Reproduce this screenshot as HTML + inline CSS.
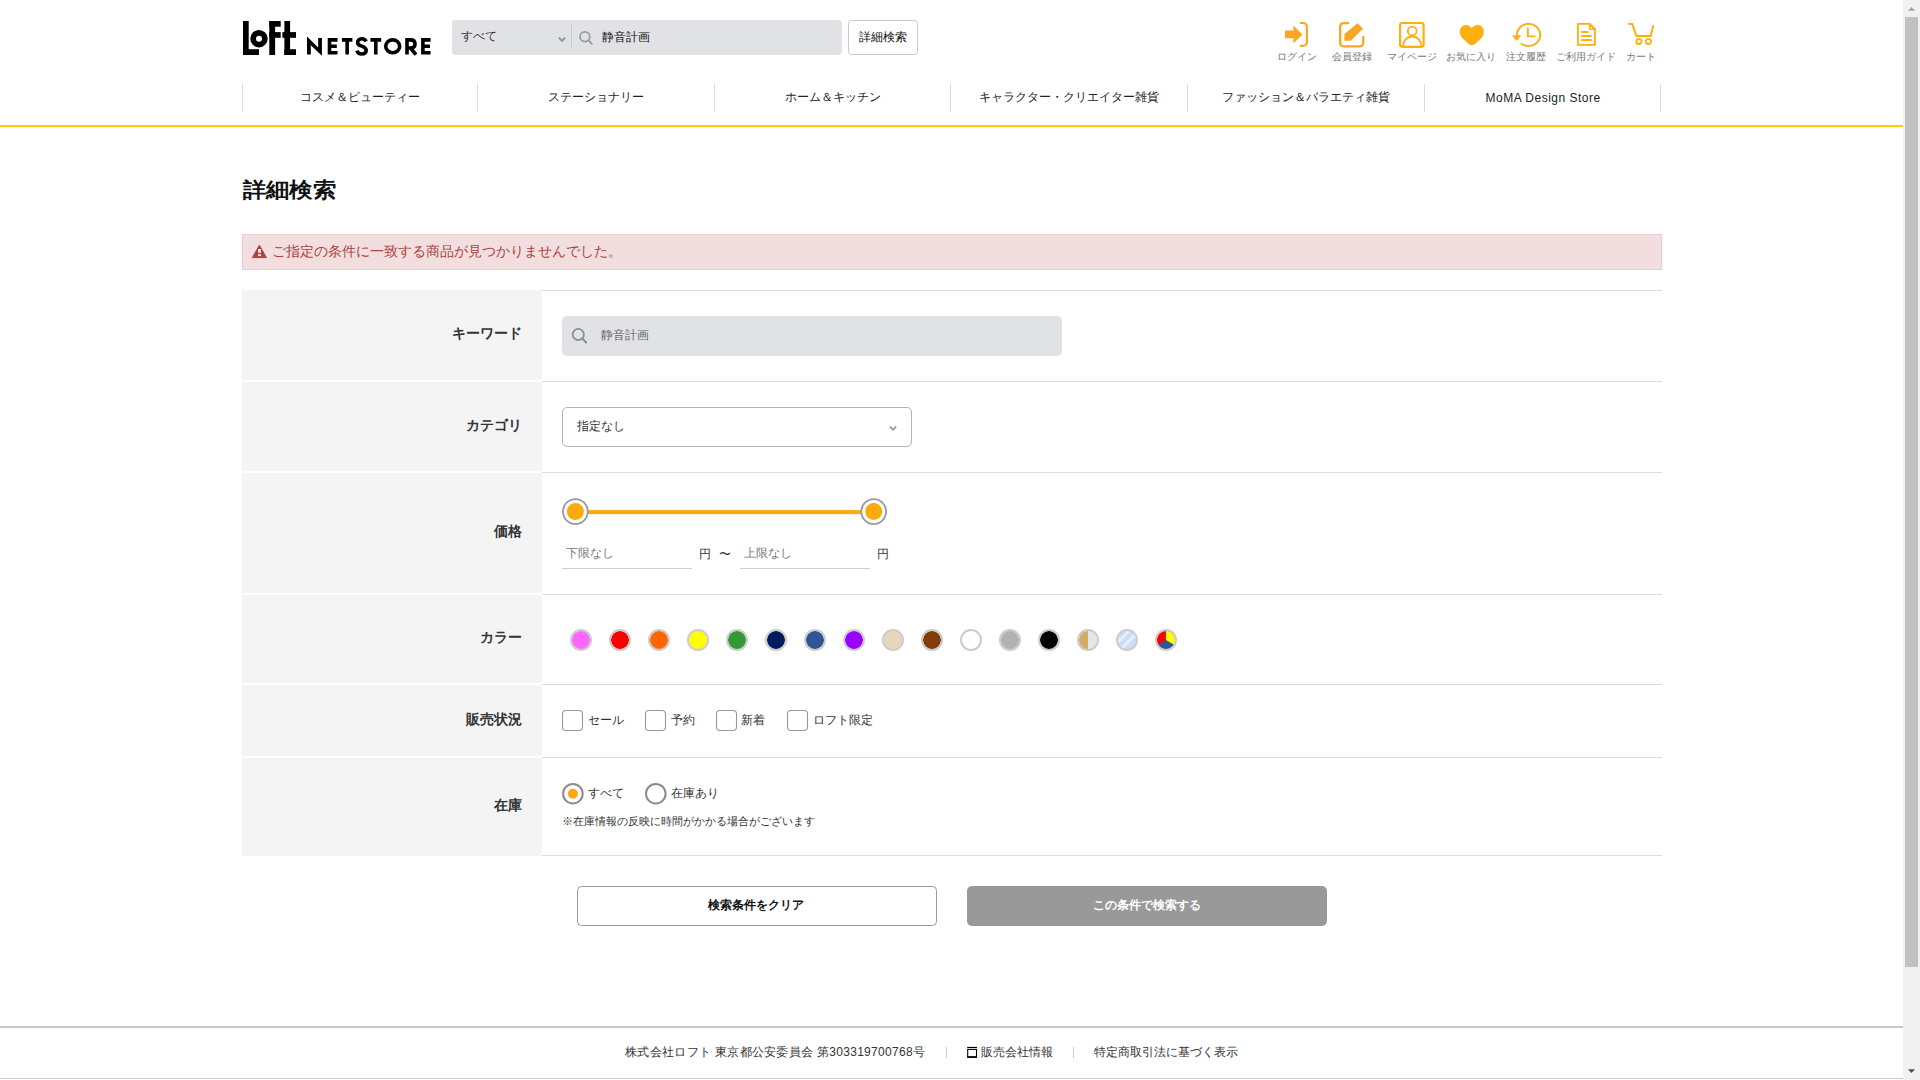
<!DOCTYPE html>
<html><head><meta charset="utf-8"><title>詳細検索 | LOFT NETSTORE</title>
<style>
html,body{margin:0;padding:0;width:1920px;height:1080px;overflow:hidden;background:#fff;}
body{position:relative;font-family:"Liberation Sans",sans-serif;}
.t{position:absolute;white-space:nowrap;}
svg{position:absolute;left:0;top:0;}
</style></head><body>
<svg width="1920" height="1080" viewBox="0 0 1920 1080">
<g fill="#000"><rect x="243" y="21" width="5.7" height="34"/><rect x="243" y="49.2" width="16" height="5.8"/><rect x="269.3" y="21" width="5.8" height="34"/><rect x="269.3" y="21" width="11.4" height="5.7"/><rect x="269.3" y="32.1" width="11.4" height="5.7"/><rect x="284.4" y="21" width="5.7" height="34"/><rect x="282.4" y="32.1" width="13.6" height="5.7"/><rect x="284.4" y="49.2" width="11.6" height="5.8"/></g><circle cx="259" cy="38.7" r="5.85" fill="none" stroke="#000" stroke-width="5.7"/>
<g fill="none" stroke="#000" stroke-width="3.6" stroke-linejoin="miter" stroke-linecap="butt"><path d="M337.5,39.9 H329.5 V52.8 H337.5 M329.5,46.3 H336.8"/><path d="M341.9,39.9 H352.4 M347.15,39.9 V54.6"/><path d="M366.2,41.4 C365.3,39.6 364,38.8 361.8,38.8 C359.2,38.8 357.6,40.4 357.6,42.4 C357.6,47.2 366.2,45 366.2,50.4 C366.2,52.6 364.4,54 361.8,54 C359.2,54 357.6,52.6 356.9,50.6"/><path d="M370.4,39.9 H381.2 M375.8,39.9 V54.6"/><ellipse cx="392.7" cy="46.35" rx="7.0" ry="6.45"/><path d="M407,54.6 V39.9 H410.5 C413.5,39.9 415,41.6 415,44 C415,46.5 413.3,48 410.5,48 H407 M410.5,48 L416,54.6"/><path d="M430.6,39.9 H422.9 V52.8 H430.6 M422.9,46.3 H430"/></g>
<path d="M307,54.6 V36.4 L318.2,47.5 V38.1 H321.9 V55.7 L310.8,45.2 V54.6 Z" fill="#000"/>
<rect x="452" y="20" width="390" height="35" rx="4" fill="#e1e2e6"/>
<path d="M558.9,37.7 L562.0,40.9 L565.1,37.7" fill="none" stroke="#959595" stroke-width="1.9"/>
<rect x="571" y="25" width="1" height="23" fill="#c9c9cb"/>
<circle cx="584.9" cy="36.75" r="4.9" fill="none" stroke="#999" stroke-width="1.7"/><path d="M588.4,40.2 L591.8,43.8" stroke="#999" stroke-width="1.9" stroke-linecap="round"/>
<rect x="848.5" y="20.5" width="69" height="34" rx="3" fill="#fff" stroke="#c8c8c8" stroke-width="1"/>
<g fill="#f8a625"><path d="M1285,30.4 H1293.4 V25.4 L1302.5,34.4 L1293.4,43.5 V38.2 H1285 Z"/></g>
<path d="M1300,23 H1303 A3.9,3.9 0 0 1 1306.9,26.9 V41.9 A3.9,3.9 0 0 1 1303,45.8 H1300" fill="none" stroke="#f8a625" stroke-width="2.2"/>
<path d="M1349,23.05 H1343.5 A3.3,3.3 0 0 0 1340.15,26.4 V43.1 A3.3,3.3 0 0 0 1343.5,46.45 H1359.9 A3.3,3.3 0 0 0 1363.25,43.1 V36" fill="none" stroke="#f8a625" stroke-width="2.3"/>
<path d="M1344.4,34.1 L1357.5,23.2 L1363.1,28.8 L1350.6,40.7 L1344.4,40.7 Z" fill="#f8a625"/>
<rect x="1400.1" y="23" width="23.5" height="23.8" rx="2.2" fill="none" stroke="#ffaf0d" stroke-width="2.2"/>
<circle cx="1412.2" cy="31" r="4.4" fill="none" stroke="#ffaf0d" stroke-width="1.8"/>
<path d="M1403,46.5 A9.2,10 0 0 1 1421.4,46.5" fill="none" stroke="#ffaf0d" stroke-width="1.8"/>
<path d="M1471.85,45.1 C1470.6,45.1 1469.4,44.6 1468.4,43.7 L1462.3,38.0 C1460.7,36.3 1459.8,34.1 1459.8,31.6 C1459.8,27.9 1462.6,25 1466.1,25 C1468.5,25 1470.6,26.3 1471.85,28.2 C1473.1,26.3 1475.2,25 1477.6,25 C1481.1,25 1483.9,27.9 1483.9,31.6 C1483.9,34.1 1483,36.3 1481.4,38.0 L1475.3,43.7 C1474.3,44.6 1473.1,45.1 1471.85,45.1 Z" fill="#ffaf0d"/>
<path d="M1517.0,34.9 A11.6,11.1 0 1 1 1521.54,43.71" fill="none" stroke="#ffaf0d" stroke-width="1.9" stroke-linecap="round"/>
<path d="M1512.1,35.2 H1521.3 L1516.5,41 Z" fill="#ffaf0d"/>
<path d="M1527.9,28.2 V36.4 H1534.6" fill="none" stroke="#ffaf0d" stroke-width="1.8" stroke-linecap="round"/>
<path d="M1577.9,23.9 H1589.6 L1594.95,29 V44.95 H1577.9 Z" fill="none" stroke="#ffaf0d" stroke-width="1.8" stroke-linejoin="round"/>
<path d="M1589.8,24.2 V29.2 H1594.8 Z" fill="none" stroke="#ffaf0d" stroke-width="1.6" stroke-linejoin="round"/>
<path d="M1582,32 H1587.8 M1582,36 H1590.9 M1582,40 H1590.9" stroke="#ffaf0d" stroke-width="1.9" stroke-linecap="round"/>
<path d="M1628.3,23.9 H1632.3 L1636.3,36 H1650.8 L1653.3,25.2" fill="none" stroke="#ffaf0d" stroke-width="2" stroke-linejoin="round"/>
<circle cx="1638.9" cy="41.4" r="2.6" fill="none" stroke="#ffaf0d" stroke-width="1.8"/>
<circle cx="1648.4" cy="41.4" r="2.6" fill="none" stroke="#ffaf0d" stroke-width="1.8"/>
<rect x="242" y="84" width="1" height="28" fill="#dcdcdc"/>
<rect x="477" y="84" width="1" height="28" fill="#dcdcdc"/>
<rect x="714" y="84" width="1" height="28" fill="#dcdcdc"/>
<rect x="950" y="84" width="1" height="28" fill="#dcdcdc"/>
<rect x="1187" y="84" width="1" height="28" fill="#dcdcdc"/>
<rect x="1424" y="84" width="1" height="28" fill="#dcdcdc"/>
<rect x="1660" y="84" width="1" height="28" fill="#dcdcdc"/>
<rect x="0" y="125" width="1903" height="2" fill="#ffcc00"/>
<rect x="242.5" y="234.5" width="1419" height="35" fill="#f2dede" stroke="#ebccd1" stroke-width="1"/>
<path d="M259.4,245.2 L266.4,257.6 H252.4 Z" fill="#a94442" stroke="#a94442" stroke-width="1" stroke-linejoin="round"/><rect x="258" y="249" width="3" height="3.8" fill="#f2dede"/><rect x="258" y="254.1" width="3" height="2" fill="#f2dede"/>
<rect x="242" y="290" width="300" height="90" fill="#f4f4f4"/>
<rect x="242" y="382" width="300" height="89" fill="#f4f4f4"/>
<rect x="242" y="473" width="300" height="120" fill="#f4f4f4"/>
<rect x="242" y="595" width="300" height="88" fill="#f4f4f4"/>
<rect x="242" y="685" width="300" height="71" fill="#f4f4f4"/>
<rect x="242" y="758" width="300" height="98" fill="#f4f4f4"/>
<rect x="542" y="290" width="1120" height="1" fill="#dddddd"/>
<rect x="542" y="381" width="1120" height="1" fill="#dddddd"/>
<rect x="542" y="472" width="1120" height="1" fill="#dddddd"/>
<rect x="542" y="594" width="1120" height="1" fill="#dddddd"/>
<rect x="542" y="684" width="1120" height="1" fill="#dddddd"/>
<rect x="542" y="757" width="1120" height="1" fill="#dddddd"/>
<rect x="542" y="855" width="1120" height="1" fill="#dddddd"/>
<rect x="562" y="316" width="500" height="40" rx="5" fill="#e1e2e6"/>
<circle cx="578.3" cy="334.5" r="5.6" fill="none" stroke="#8d8d8d" stroke-width="1.8"/><path d="M582.3,338.5 L586.1,342.5" stroke="#8d8d8d" stroke-width="2" stroke-linecap="round"/>
<rect x="562.5" y="407.5" width="349" height="39" rx="4.5" fill="#fff" stroke="#b4b4b4" stroke-width="1"/>
<path d="M889.9,426.6 L893,429.8 L896.1,426.6" fill="none" stroke="#999" stroke-width="1.8"/>
<rect x="588" y="510.1" width="273" height="4" fill="#ffa90a"/>
<circle cx="575.4" cy="511.5" r="12.4" fill="#fff" stroke="#9a9a9a" stroke-width="1.8"/>
<circle cx="575.4" cy="511.5" r="8.5" fill="#ffa90a"/>
<circle cx="873.7" cy="511.5" r="12.4" fill="#fff" stroke="#9a9a9a" stroke-width="1.8"/>
<circle cx="873.7" cy="511.5" r="8.5" fill="#ffa90a"/>
<rect x="562" y="568" width="130" height="1" fill="#cfcfcf"/>
<rect x="740" y="568" width="130" height="1" fill="#cfcfcf"/>
<defs><clipPath id="c14"><circle cx="1088" cy="640" r="9.2"/></clipPath><clipPath id="c15"><circle cx="1127" cy="640" r="9.2"/></clipPath><clipPath id="c16"><circle cx="1166" cy="640" r="9.2"/></clipPath></defs>
<circle cx="581" cy="640" r="9.2" fill="#ff66ff"/>
<circle cx="581" cy="640" r="10" fill="none" stroke="#cccccc" stroke-width="2"/>
<circle cx="620" cy="640" r="9.2" fill="#ff0000"/>
<circle cx="620" cy="640" r="10" fill="none" stroke="#cccccc" stroke-width="2"/>
<circle cx="659" cy="640" r="9.2" fill="#ff6600"/>
<circle cx="659" cy="640" r="10" fill="none" stroke="#cccccc" stroke-width="2"/>
<circle cx="698" cy="640" r="9.2" fill="#ffff00"/>
<circle cx="698" cy="640" r="10" fill="none" stroke="#cccccc" stroke-width="2"/>
<circle cx="737" cy="640" r="9.2" fill="#339933"/>
<circle cx="737" cy="640" r="10" fill="none" stroke="#cccccc" stroke-width="2"/>
<circle cx="776" cy="640" r="9.2" fill="#001c5c"/>
<circle cx="776" cy="640" r="10" fill="none" stroke="#cccccc" stroke-width="2"/>
<circle cx="815" cy="640" r="9.2" fill="#2f5597"/>
<circle cx="815" cy="640" r="10" fill="none" stroke="#cccccc" stroke-width="2"/>
<circle cx="854" cy="640" r="9.2" fill="#9900ff"/>
<circle cx="854" cy="640" r="10" fill="none" stroke="#cccccc" stroke-width="2"/>
<circle cx="893" cy="640" r="9.2" fill="#e6d8b8"/>
<circle cx="893" cy="640" r="10" fill="none" stroke="#cccccc" stroke-width="2"/>
<circle cx="932" cy="640" r="9.2" fill="#843c0c"/>
<circle cx="932" cy="640" r="10" fill="none" stroke="#cccccc" stroke-width="2"/>
<circle cx="971" cy="640" r="9.2" fill="#ffffff"/>
<circle cx="971" cy="640" r="10" fill="none" stroke="#cccccc" stroke-width="2"/>
<circle cx="1010" cy="640" r="9.2" fill="#b2b2b2"/>
<circle cx="1010" cy="640" r="10" fill="none" stroke="#cccccc" stroke-width="2"/>
<circle cx="1049" cy="640" r="9.2" fill="#000000"/>
<circle cx="1049" cy="640" r="10" fill="none" stroke="#cccccc" stroke-width="2"/>
<g clip-path="url(#c14)"><rect x="1078" y="630" width="10" height="20" fill="#d2ad62"/><rect x="1088" y="630" width="10" height="20" fill="#e6e6e6"/></g>
<circle cx="1088" cy="640" r="10" fill="none" stroke="#cccccc" stroke-width="2"/>
<g clip-path="url(#c15)"><rect x="1117" y="630" width="20" height="20" fill="#c9ddf6"/><path d="M1114,646 L1131,629 M1119,651 L1136,634" stroke="#e6f0fb" stroke-width="3"/></g>
<circle cx="1127" cy="640" r="10" fill="none" stroke="#cccccc" stroke-width="2"/>
<g clip-path="url(#c16)"><rect x="1156" y="630" width="20" height="20" fill="#2f5597"/><path d="M1166,640 L1166,629 L1176,629 L1176,646 Z" fill="#ffff00"/><path d="M1166,640 L1166,629 L1156,629 L1156,646 Z" fill="#ff0000"/></g>
<circle cx="1166" cy="640" r="10" fill="none" stroke="#cccccc" stroke-width="2"/>
<rect x="562.5" y="710.5" width="20" height="20" rx="3.5" fill="#fff" stroke="#999" stroke-width="1.1"/>
<rect x="645.5" y="710.5" width="20" height="20" rx="3.5" fill="#fff" stroke="#999" stroke-width="1.1"/>
<rect x="716.5" y="710.5" width="20" height="20" rx="3.5" fill="#fff" stroke="#999" stroke-width="1.1"/>
<rect x="787.5" y="710.5" width="20" height="20" rx="3.5" fill="#fff" stroke="#999" stroke-width="1.1"/>
<circle cx="572.9" cy="793.7" r="9.8" fill="#fff" stroke="#8c8c8c" stroke-width="2"/>
<circle cx="572.9" cy="793.7" r="5" fill="#ffa90a"/>
<circle cx="655.8" cy="793.7" r="9.8" fill="#fff" stroke="#8c8c8c" stroke-width="2"/>
<rect x="577.5" y="886.5" width="359" height="39" rx="4" fill="#fff" stroke="#999" stroke-width="1"/>
<rect x="967" y="886" width="360" height="40" rx="5" fill="#999999"/>
<rect x="0" y="1026" width="1903" height="2" fill="#c8c8c8"/>
<rect x="0" y="1078" width="1903" height="1" fill="#cccccc"/>
<rect x="946" y="1047" width="1" height="11" fill="#cccccc"/>
<rect x="1073" y="1047" width="1" height="11" fill="#cccccc"/>
<rect x="967.2" y="1046.9" width="9.8" height="1.1" fill="#000"/><rect x="967.7" y="1049.4" width="8.8" height="7.6" fill="none" stroke="#000" stroke-width="1.1"/><rect x="967.2" y="1056.3" width="9.8" height="1.6" fill="#000"/>
<rect x="1903" y="0" width="17" height="1080" fill="#f1f1f1"/>
<rect x="1905" y="17" width="13" height="950" fill="#c1c1c1"/>
<path d="M1908,10.7 L1911.5,6.9 L1915,10.7 Z" fill="#a3a3a3"/>
<path d="M1908,1069.3 L1915,1069.3 L1911.5,1073 Z" fill="#505050"/>
</svg>
<div class="t" style="left:461.00px;top:27.20px;font-size:12px;line-height:19px;color:#333;">すべて</div>
<div class="t" style="left:602.40px;top:27.50px;font-size:12px;line-height:19px;color:#111;">静音計画</div>
<div class="t" style="left:847.50px;width:70px;text-align:center;top:27.90px;font-size:12px;line-height:19px;color:#111;">詳細検索</div>
<div class="t" style="left:1256.50px;width:80px;text-align:center;top:48.80px;font-size:10px;line-height:16px;color:#777;">ログイン</div>
<div class="t" style="left:1311.60px;width:80px;text-align:center;top:48.80px;font-size:10px;line-height:16px;color:#777;">会員登録</div>
<div class="t" style="left:1371.60px;width:80px;text-align:center;top:48.80px;font-size:10px;line-height:16px;color:#777;">マイページ</div>
<div class="t" style="left:1431.00px;width:80px;text-align:center;top:48.80px;font-size:10px;line-height:16px;color:#777;">お気に入り</div>
<div class="t" style="left:1486.40px;width:80px;text-align:center;top:48.80px;font-size:10px;line-height:16px;color:#777;">注文履歴</div>
<div class="t" style="left:1546.40px;width:80px;text-align:center;top:48.80px;font-size:10px;line-height:16px;color:#777;">ご利用ガイド</div>
<div class="t" style="left:1601.40px;width:80px;text-align:center;top:48.80px;font-size:10px;line-height:16px;color:#777;">カート</div>
<div class="t" style="left:242.00px;width:236px;text-align:center;top:88.10px;font-size:12px;line-height:19px;color:#222;">コスメ＆ビューティー</div>
<div class="t" style="left:478.00px;width:236px;text-align:center;top:88.10px;font-size:12px;line-height:19px;color:#222;">ステーショナリー</div>
<div class="t" style="left:714.50px;width:236px;text-align:center;top:88.10px;font-size:12px;line-height:19px;color:#222;">ホーム＆キッチン</div>
<div class="t" style="left:951.00px;width:236px;text-align:center;top:88.10px;font-size:12px;line-height:19px;color:#222;">キャラクター・クリエイター雑貨</div>
<div class="t" style="left:1188.00px;width:236px;text-align:center;top:88.10px;font-size:12px;line-height:19px;color:#222;">ファッション＆バラエティ雑貨</div>
<div class="t" style="left:1425.10px;width:236px;text-align:center;top:88.50px;font-size:12px;line-height:19px;color:#222;letter-spacing:0.5px;">MoMA Design Store</div>
<div class="t" style="left:240.25px;top:170.60px;font-size:24px;line-height:38px;color:#111;font-weight:bold;transform:translate(2.5px,0) scale(0.975,0.875);transform-origin:0 50%;">詳細検索</div>
<div class="t" style="left:271.83px;top:240.30px;font-size:14px;line-height:22px;color:#a94442;">ご指定の条件に一致する商品が見つかりませんでした。</div>
<div class="t" style="left:322.37px;width:200px;text-align:right;top:321.60px;font-size:14px;line-height:22px;color:#333;font-weight:bold;">キーワード</div>
<div class="t" style="left:322.37px;width:200px;text-align:right;top:413.60px;font-size:14px;line-height:22px;color:#333;font-weight:bold;">カテゴリ</div>
<div class="t" style="left:322.37px;width:200px;text-align:right;top:519.90px;font-size:14px;line-height:22px;color:#333;font-weight:bold;">価格</div>
<div class="t" style="left:322.37px;width:200px;text-align:right;top:625.50px;font-size:14px;line-height:22px;color:#333;font-weight:bold;">カラー</div>
<div class="t" style="left:322.37px;width:200px;text-align:right;top:707.60px;font-size:14px;line-height:22px;color:#333;font-weight:bold;">販売状況</div>
<div class="t" style="left:322.37px;width:200px;text-align:right;top:793.60px;font-size:14px;line-height:22px;color:#333;font-weight:bold;">在庫</div>
<div class="t" style="left:600.70px;top:326.30px;font-size:12px;line-height:19px;color:#666;">静音計画</div>
<div class="t" style="left:576.80px;top:416.70px;font-size:12px;line-height:19px;color:#333;">指定なし</div>
<div class="t" style="left:565.80px;top:544.10px;font-size:12px;line-height:19px;color:#777;">下限なし</div>
<div class="t" style="left:743.70px;top:544.10px;font-size:12px;line-height:19px;color:#777;">上限なし</div>
<div class="t" style="left:698.80px;top:545.10px;font-size:12px;line-height:19px;color:#333;">円</div>
<div class="t" style="left:718.80px;top:544.50px;font-size:12px;line-height:19px;color:#333;">〜</div>
<div class="t" style="left:877.00px;top:545.10px;font-size:12px;line-height:19px;color:#333;">円</div>
<div class="t" style="left:587.90px;top:711.30px;font-size:12px;line-height:19px;color:#333;">セール</div>
<div class="t" style="left:670.80px;top:711.30px;font-size:12px;line-height:19px;color:#333;">予約</div>
<div class="t" style="left:741.00px;top:711.30px;font-size:12px;line-height:19px;color:#333;">新着</div>
<div class="t" style="left:813.25px;top:711.30px;font-size:12px;line-height:19px;color:#333;">ロフト限定</div>
<div class="t" style="left:587.80px;top:784.40px;font-size:12px;line-height:19px;color:#333;">すべて</div>
<div class="t" style="left:670.75px;top:784.40px;font-size:12px;line-height:19px;color:#333;">在庫あり</div>
<div class="t" style="left:561.68px;top:811.90px;font-size:11px;line-height:18px;color:#333;">※在庫情報の反映に時間がかかる場合がございます</div>
<div class="t" style="left:606.20px;width:300px;text-align:center;top:895.70px;font-size:12px;line-height:19px;color:#111;font-weight:bold;">検索条件をクリア</div>
<div class="t" style="left:996.50px;width:300px;text-align:center;top:895.70px;font-size:12px;line-height:19px;color:#fff;font-weight:bold;">この条件で検索する</div>
<div class="t" style="left:625.20px;top:1042.80px;font-size:12px;line-height:19px;color:#333;letter-spacing:0.3px;">株式会社ロフト 東京都公安委員会 第303319700768号</div>
<div class="t" style="left:980.80px;top:1043.00px;font-size:12px;line-height:19px;color:#333;">販売会社情報</div>
<div class="t" style="left:1094.40px;top:1042.80px;font-size:12px;line-height:19px;color:#333;">特定商取引法に基づく表示</div>
</body></html>
